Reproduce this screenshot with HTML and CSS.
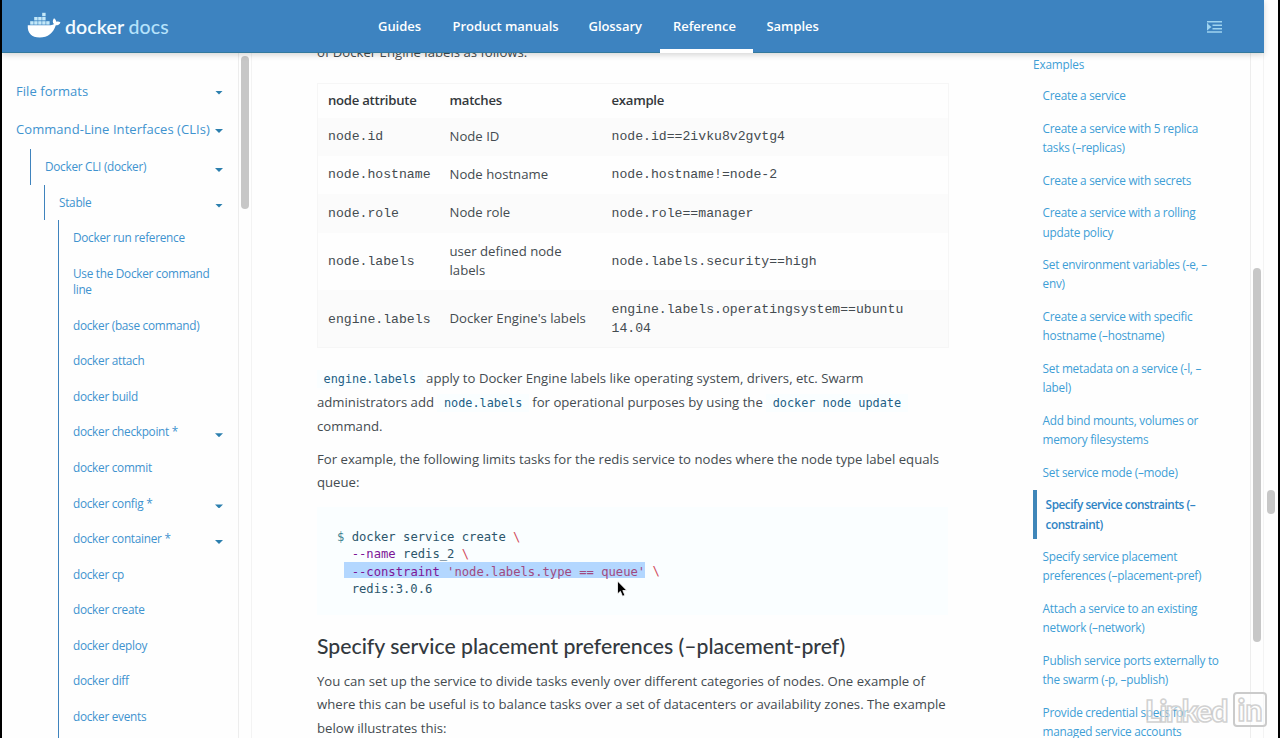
FILE: index.html
```html
<!DOCTYPE html>
<html lang="en">
<head>
<meta charset="utf-8">
<title>docker service create | Docker Documentation</title>
<link rel="stylesheet" href="styles.css">
</head>
<body>
<div class="window">
  <div class="page">
    <header class="topbar">
      <div class="logo">
        <svg class="whale" viewBox="0 0 34 26" width="34" height="26">
          <g fill="#c4e8f8"><rect x="3.2" y="9.2" width="3.4" height="3.4"/><rect x="7.2" y="9.2" width="3.4" height="3.4"/><rect x="11.2" y="9.2" width="3.4" height="3.4"/><rect x="15.2" y="9.2" width="3.4" height="3.4"/><rect x="19.2" y="9.2" width="3.4" height="3.4"/><rect x="7.2" y="5" width="3.4" height="3.4"/><rect x="11.2" y="5" width="3.4" height="3.4"/><rect x="15.2" y="5" width="3.4" height="3.4"/><rect x="15.2" y=".8" width="3.4" height="3.4"/></g>
          <path fill="#fff" d="M.8 13.2h22.8c1.5 0 2.7-.4 3.3-1.1-1.5-1.8-1.4-4 .1-5.900 1.600 1.100 2.200 2.400 2.200 3.600 1.700-.4 3.200-.1 4.300.6-.8 2-2.700 2.900-4.700 2.900C26.300 21.200 21 25.500 12.700 25.500 4.600 25.500.2 21 .8 13.200z"/>
        </svg>
        <span class="brand">docker</span><span class="brand light">docs</span>
      </div>
      <nav class="nav">
        <a class="n1">Guides</a><a class="n2">Product manuals</a><a class="n3">Glossary</a><a class="n4 active">Reference</a><a class="n5">Samples</a>
      </nav>
      <svg class="toggle" viewBox="0 0 15 12" width="15" height="12" fill="#9fd4f0"><path d="M0 0h15v1.500H0zM5.500 3.500H15V5H5.500zM5.500 7H15v1.500H5.500zM0 10.300h15v1.500H0zM0 2.300h1.200v7H0zM1.200 3.200L4.400 5.900 1.200 8.600z"/></svg>
    </header>
    <div class="columns">
      <aside class="sidebar">
        <ul class="tree">
          <li class="top"><a>File formats</a><i></i></li>
          <li class="top"><a>Command-Line Interfaces (CLIs)</a><i></i></li>
          <li class="l1"><a>Docker CLI (docker)</a><i></i></li>
          <li class="l2"><a>Stable</a><i></i></li>
          <li class="l3"><a>Docker run reference</a></li>
          <li class="l3"><a>Use the Docker command<br>line</a></li>
          <li class="l3"><a>docker (base command)</a></li>
          <li class="l3"><a>docker attach</a></li>
          <li class="l3"><a>docker build</a></li>
          <li class="l3"><a>docker checkpoint *</a><i></i></li>
          <li class="l3"><a>docker commit</a></li>
          <li class="l3"><a>docker config *</a><i></i></li>
          <li class="l3"><a>docker container *</a><i></i></li>
          <li class="l3"><a>docker cp</a></li>
          <li class="l3"><a>docker create</a></li>
          <li class="l3"><a>docker deploy</a></li>
          <li class="l3"><a>docker diff</a></li>
          <li class="l3"><a>docker events</a></li>
        </ul>
        <div class="track"><div class="thumb"></div></div>
      </aside>
      <main class="content">
        <p class="intro">of Docker Engine labels as follows:</p>
        <table class="attrs">
          <colgroup><col class="c1"><col class="c2"><col class="c3"></colgroup>
          <thead><tr><th>node attribute</th><th>matches</th><th>example</th></tr></thead>
          <tbody>
            <tr><td class="mono">node.id</td><td>Node ID</td><td class="mono">node.id==2ivku8v2gvtg4</td></tr>
            <tr><td class="mono">node.hostname</td><td>Node hostname</td><td class="mono">node.hostname!=node-2</td></tr>
            <tr><td class="mono">node.role</td><td>Node role</td><td class="mono">node.role==manager</td></tr>
            <tr class="tall"><td class="mono">node.labels</td><td>user defined node<br>labels</td><td class="mono">node.labels.security==high</td></tr>
            <tr class="tall last-row"><td class="mono">engine.labels</td><td>Docker Engine's labels</td><td class="mono">engine.labels.operatingsystem==ubuntu<br>14.04</td></tr>
          </tbody>
        </table>
        <p class="para first"><code>engine.labels</code> apply to Docker Engine labels like operating system, drivers, etc. Swarm<br>administrators add <code>node.labels</code> for operational purposes by using the <code>docker node update</code><br>command.</p>
        <p class="para">For example, the following limits tasks for the redis service to nodes where the node type label equals<br>queue:</p>
<pre class="code"><b>$</b> docker service create <em>\</em>
  <u>--name</u> redis_2 <em>\</em>
 <span class="sel"> <u>--constraint</u> <s>'node.labels.type == queue'</s></span> <em>\</em>
  redis:3.0.6</pre>
        <h3 class="heading">Specify service placement preferences (–placement-pref)</h3>
        <p class="para last">You can set up the service to divide tasks evenly over different categories of nodes. One example of<br>where this can be useful is to balance tasks over a set of datacenters or availability zones. The example<br>below illustrates this:</p>
      </main>
      <aside class="toc">
        <ul class="toclist">
          <li class="root">Examples</li>
          <li>Create a service</li>
          <li>Create a service with 5 replica<br>tasks (–replicas)</li>
          <li>Create a service with secrets</li>
          <li>Create a service with a rolling<br>update policy</li>
          <li>Set environment variables (-e, –<br>env)</li>
          <li>Create a service with specific<br>hostname (–hostname)</li>
          <li>Set metadata on a service (-l, –<br>label)</li>
          <li>Add bind mounts, volumes or<br>memory filesystems</li>
          <li>Set service mode (–mode)</li>
          <li class="current">Specify service constraints (–<br>constraint)</li>
          <li>Specify service placement<br>preferences (–placement-pref)</li>
          <li>Attach a service to an existing<br>network (–network)</li>
          <li>Publish service ports externally to<br>the swarm (-p, –publish)</li>
          <li>Provide credential specs for<br>managed service accounts</li>
        </ul>
        <div class="track"><div class="thumb"></div></div>
      </aside>
    </div>
  </div>
  <div class="gutter"><div class="thumb"></div></div>
  <svg class="cursor" viewBox="0 0 12 18" width="12" height="18"><path d="M1.500 1v13l2.900-2.700 2.100 5 2.400-1-2.100-4.800h4z" fill="#000" stroke="#fff" stroke-width=".8"/></svg>
  <div class="watermark"><span class="word">Linked</span><span class="box">in</span></div>
</div>
</body>
</html>
```
FILE: styles.css
```css
* { box-sizing: border-box; }
body { margin: 0; background: #000; font-family: "Open Sans", "Liberation Sans", sans-serif; }
ul { list-style: none; margin: 0; padding: 0; }
p { margin: 0; }
.window { position: relative; display: flex; width: 1280px; height: 738px; padding: 0 2px; overflow: hidden; }
.page { display: flex; flex-direction: column; width: 1262px; height: 738px; background: #fefefe; }
.topbar { position: relative; z-index: 2; display: flex; flex: none; height: 53px; background: #3d83c0; border-bottom: 1px solid #33799d; box-shadow: 0 2px 6px rgba(0,0,0,.16); }
.logo { display: flex; width: 361px; padding: 12px 0 0 25px; }
.whale { flex: none; }
.brand { font: 600 19.500px/29px Lato, sans-serif; color: #f4fbff; margin-left: 4px; width: 59px; letter-spacing: .1px; }
.brand.light { font-weight: 500; color: #b5e2fb; margin-left: 4.500px; }
.nav { display: flex; flex: 1; color: #fff; font-size: 13px; font-weight: 600; line-height: 52px; height: 53px; }
.nav a { padding-left: 15px; white-space: nowrap; letter-spacing: -.05px; }
.n1 { width: 74.5px; }
.n2 { width: 136px; }
.n3 { width: 84px; }
.n4 { width: 93px; margin-left: 2px; margin-right: -1px; }
.nav .n4 { padding-left: 13.500px; }
.active { border-bottom: 4px solid #fff; }
.toggle { flex: none; margin: 21px 42px 0 0; }
.columns { display: flex; flex: 1; min-height: 0; }
.sidebar { display: flex; flex: none; width: 250px; color: #3f93cf; }
.tree { width: 236px; padding-top: 19px; font-size: 11.800px; line-height: 16.300px; letter-spacing: -.28px; overflow: hidden; flex: none; }
.tree li { display: flex; justify-content: space-between; padding: 9.100px 15px 10.200px 0; }
.tree .top { padding: 8.500px 15px 10px 14px; font-size: 13px; line-height: 20px; letter-spacing: .06px; white-space: nowrap; }
.tree i { flex: none; width: 8px; height: 4px; background: #2c7fae; clip-path: polygon(0 0,100% 0,50% 100%); margin-top: 9.900px; }
.tree .top i { margin-top: 10px; }
.tree .l1 { margin-left: 28px; padding-left: 14px; border-left: 1.500px solid #3f83bd; }
.tree .l2 { margin-left: 42px; padding-left: 14px; border-left: 1.500px solid #3f83bd; }
.tree .l3 { margin-left: 56px; padding-left: 14px; border-left: 1.500px solid #3f83bd; }
.tree .l3:last-child { padding-bottom: 30px; }
.track { width: 14px; border-left: 1px solid #ededed; border-right: 1px solid #f3f3f3; padding: 3px 2px 0; }
.thumb { width: 8px; border-radius: 4px; background: #c7c7c7; }
.sidebar .thumb { height: 153px; }
.content { width: 631px; margin-left: 65px; flex: none; color: #444b50; font-size: 13.160px; }
.intro { line-height: 22px; margin-top: -12px; height: 42px; white-space: nowrap; }
.attrs { border-collapse: collapse; table-layout: fixed; width: 631px; border: 1px solid #f6f6f6; font-size: 13.160px; line-height: 19.200px; }
.c1 { width: 122px; } .c2 { width: 162px; } .c3 { width: 347px; }
.attrs th { height: 34px; padding: 0 10px; text-align: left; font-weight: 600; letter-spacing: -.27px; color: #33383c; }
.attrs td { height: 38.400px; padding: 0 10px 1px; white-space: nowrap; }
.attrs .tall td { height: 57.300px; }
.attrs .last-row td { padding-bottom: 0; }
.attrs tbody tr:nth-child(odd) { background: #fbfbfb; }
.attrs .mono { font-family: "Liberation Mono", monospace; font-size: 13.150px; padding-bottom: 0; }
.attrs .last-row .mono { padding-top: 2px; }
.para { line-height: 23.200px; white-space: nowrap; }
.para.first { margin-top: 18.500px; margin-bottom: 9.500px; line-height: 24px; }
.para code { font: 11.850px "DejaVu Sans Mono", monospace; color: #225f86; background: #fafeff; padding: 2px 6.500px; }
.code { margin: 12.500px 0 0; height: 108px; padding: 22px 20px 0; background: #fafeff; color: #2c566c; font: 12.200px/17.300px "DejaVu Sans Mono", monospace; }
.code b { font-weight: 400; color: #3f8390; }
.code em { font-style: normal; color: #d14a5c; }
.code u { text-decoration: none; color: #7d1596; }
.code s { text-decoration: none; color: #a04a80; }
.sel { background: #b3d7ff; padding-top: 2.500px; }
.heading { margin: 17px 0 0; font: 500 21.230px/28px Lato, sans-serif; color: #33393e; white-space: nowrap; }
.last { margin-top: 10.500px; }
.toc { display: flex; margin-left: auto; width: 232px; flex: none; color: #3f9ed6; }
.toclist { width: 218px; flex: none; font-size: 11.800px; line-height: 19.400px; letter-spacing: -.26px; padding: 2.300px 0 0 .6px; }
.toclist li { padding-left: 10px; margin-bottom: 13.100px; white-space: nowrap; }
.toclist .root { padding-left: .5px; margin-bottom: 11.500px; letter-spacing: -.2px; }
.toclist .current { padding: 5px 0 5px 9px; margin-top: -5px; margin-bottom: 8px; border-left: 4px solid #3f86b9; color: #2f84c4; font-weight: 600; letter-spacing: -.45px; }
.toc .thumb { height: 374px; margin-top: 215px; }
.toc .track { padding: 0 2px; }
.gutter { width: 14px; background: #fefefe; padding: 490px 0 0 3px; }
.gutter .thumb { height: 24px; }
.cursor { position: absolute; left: 616px; top: 580px; }
.watermark { position: absolute; left: 1145px; top: 692px; display: flex; font: 900 30px/36px Lato, sans-serif; color: rgba(255,255,255,.5); -webkit-text-stroke: 1.600px rgba(195,195,195,.75); }
.word { width: 88px; letter-spacing: -1.200px; }
.box { width: 34px; height: 35px; line-height: 31px; text-align: center; border: 2.500px solid #cbcbcb; border-radius: 4px; background: rgba(255,255,255,.4); }
```
